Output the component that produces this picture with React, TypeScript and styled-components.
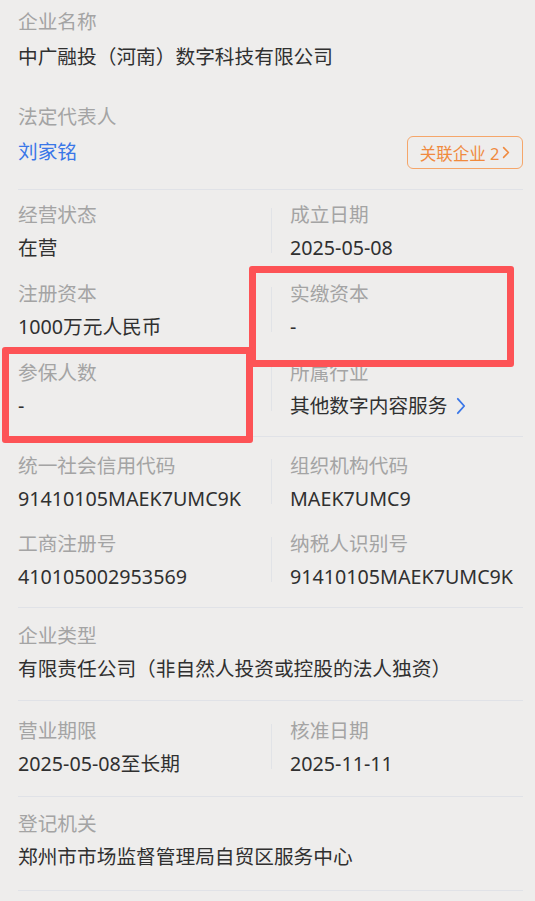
import React from "react";
import styled, { createGlobalStyle } from "styled-components";

const Global = createGlobalStyle`
  html, body { margin: 0; padding: 0; background: #eeedec; }
  body { font-family: "Noto Sans", "Noto Sans CJK SC", sans-serif; }
`;

const Page = styled.div`
  position: relative;
  width: 535px;
  height: 901px;
  overflow: hidden;
  background: #eeedec;
  padding: 0 12px 0 18px;
  box-sizing: border-box;
`;

const Section = styled.section<{ $top: number; $bottom: number; $gap?: number }>`
  display: flex;
  flex-direction: column;
  gap: ${(p) => p.$gap ?? 22}px;
  padding-top: ${(p) => p.$top}px;
  padding-bottom: ${(p) => p.$bottom}px;
  border-bottom: 1px solid #e0e2e7;
`;

const Grid = styled.div<{ $rowGap: number }>`
  display: grid;
  grid-template-columns: 253px 1px 1fr;
  row-gap: ${(p) => p.$rowGap}px;
`;

const Item = styled.div<{ $right?: boolean; $gap?: number }>`
  display: flex;
  flex-direction: column;
  gap: ${(p) => p.$gap ?? 9}px;
  padding-left: ${(p) => (p.$right ? 18 : 0)}px;
  min-width: 0;
`;

const VDivider = styled.div`
  background: #e1e3e7;
  margin: 5px 0 7px;
`;

const Label = styled.div`
  font-size: 19.7px;
  line-height: 24px;
  color: #a4a4a4;
  white-space: nowrap;
`;

const Value = styled.div<{ $link?: boolean }>`
  font-size: 19.7px;
  line-height: 24px;
  color: ${(p) => (p.$link ? "#3a77e8" : "#303030")};
  white-space: nowrap;
  display: flex;
  align-items: center;
  gap: 8px;
`;

const RowBetween = styled.div`
  display: flex;
  align-items: flex-end;
  justify-content: space-between;
`;

const RelButton = styled.div`
  box-sizing: border-box;
  width: 116px;
  height: 33px;
  border: 1.5px solid #f5a66a;
  border-radius: 6px;
  color: #f08a3e;
  font-size: 16.5px;
  display: flex;
  align-items: center;
  justify-content: center;
  gap: 3px;
  margin-bottom: -5px;
`;

const RedBox = styled.div<{ $x: number; $y: number; $w: number; $h: number }>`
  position: absolute;
  left: ${(p) => p.$x}px;
  top: ${(p) => p.$y}px;
  width: ${(p) => p.$w}px;
  height: ${(p) => p.$h}px;
  border: 7px solid #fd5356;
  border-radius: 3px;
  box-sizing: border-box;
  pointer-events: none;
`;

const Chevron = ({ color, w, h, sw }: { color: string; w: number; h: number; sw: number }) => (
  <svg width={w} height={h} viewBox={`0 0 ${w} ${h}`} fill="none">
    <polyline
      points={`${sw},${sw} ${w - sw},${h / 2} ${sw},${h - sw}`}
      stroke={color}
      strokeWidth={sw}
      strokeLinecap="round"
      strokeLinejoin="round"
    />
  </svg>
);

type Pair = [string, React.ReactNode];

const GridRows = ({ rows, rowGap }: { rows: [Pair, Pair][]; rowGap: number }) => (
  <Grid $rowGap={rowGap}>
    {rows.map(([l, r], i) => (
      <React.Fragment key={i}>
        <Item>
          <Label>{l[0]}</Label>
          <Value>{l[1]}</Value>
        </Item>
        <VDivider />
        <Item $right>
          <Label>{r[0]}</Label>
          <Value>{r[1]}</Value>
        </Item>
      </React.Fragment>
    ))}
  </Grid>
);

export default function App() {
  return (
    <>
      <Global />
      <Page>
        <Section $top={10} $bottom={25} $gap={36}>
          <Item $gap={11}>
            <Label>企业名称</Label>
            <Value>中广融投（河南）数字科技有限公司</Value>
          </Item>
          <RowBetween>
            <Item $gap={11}>
              <Label>法定代表人</Label>
              <Value $link>刘家铭</Value>
            </Item>
            <RelButton>
              关联企业 2<Chevron color="#f08a3e" w={8} h={13} sw={1.6} />
            </RelButton>
          </RowBetween>
        </Section>

        <Section $top={13} $bottom={18}>
          <GridRows
            rowGap={22}
            rows={[
              [["经营状态", "在营"], ["成立日期", "2025-05-08"]],
              [["注册资本", "1000万元人民币"], ["实缴资本", "-"]],
              [
                ["参保人数", "-"],
                [
                  "所属行业",
                  <>
                    其他数字内容服务
                    <Chevron color="#3a77e8" w={10} h={18} sw={1.8} />
                  </>,
                ],
              ],
            ]}
          />
        </Section>

        <Section $top={17} $bottom={18}>
          <GridRows
            rowGap={21}
            rows={[
              [["统一社会信用代码", "91410105MAEK7UMC9K"], ["组织机构代码", "MAEK7UMC9"]],
              [["工商注册号", "410105002953569"], ["纳税人识别号", "91410105MAEK7UMC9K"]],
            ]}
          />
        </Section>

        <Section $top={16} $bottom={19}>
          <Item>
            <Label>企业类型</Label>
            <Value>有限责任公司（非自然人投资或控股的法人独资）</Value>
          </Item>
        </Section>

        <Section $top={18} $bottom={20}>
          <GridRows rowGap={21} rows={[[["营业期限", "2025-05-08至长期"], ["核准日期", "2025-11-11"]]]} />
        </Section>

        <Section $top={15} $bottom={21}>
          <Item>
            <Label>登记机关</Label>
            <Value>郑州市市场监督管理局自贸区服务中心</Value>
          </Item>
        </Section>

        <RedBox $x={249} $y={266} $w={265} $h={101} />
        <RedBox $x={2} $y={347} $w={251} $h={96} />
      </Page>
    </>
  );
}
